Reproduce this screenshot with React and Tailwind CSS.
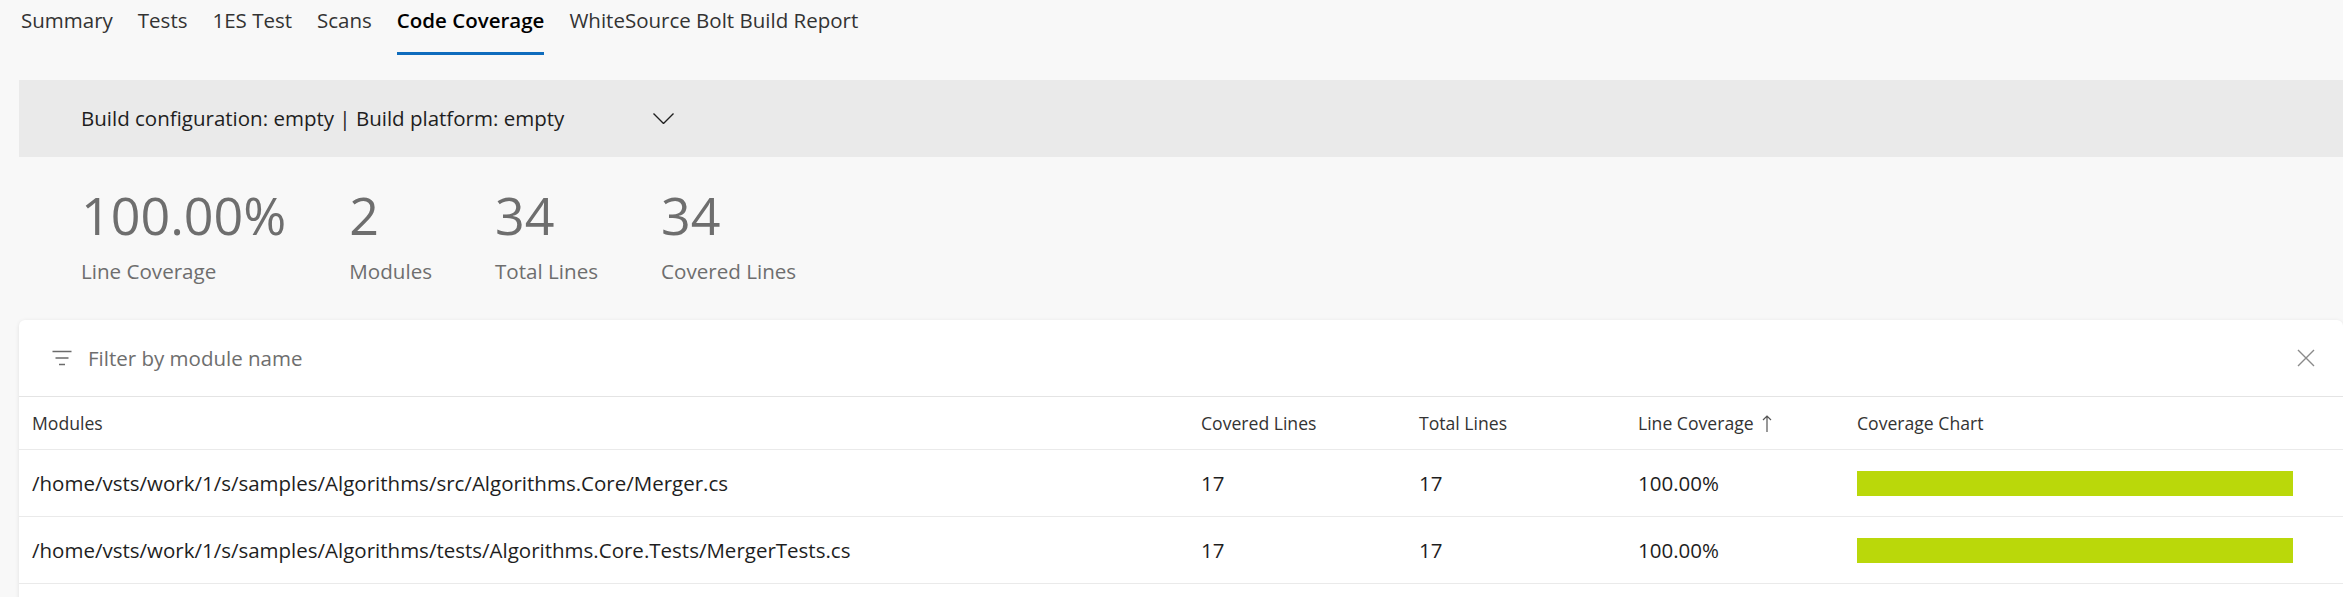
import React from 'react';

const tabs = ['Summary', 'Tests', '1ES Test', 'Scans', 'Code Coverage', 'WhiteSource Bolt Build Report'];

const stats = [
  { value: '100.00%', label: 'Line Coverage' },
  { value: '2', label: 'Modules' },
  { value: '34', label: 'Total Lines' },
  { value: '34', label: 'Covered Lines' },
];

const rows = [
  { module: '/home/vsts/work/1/s/samples/Algorithms/src/Algorithms.Core/Merger.cs', covered: 17, total: 17, coverage: 100 },
  { module: '/home/vsts/work/1/s/samples/Algorithms/tests/Algorithms.Core.Tests/MergerTests.cs', covered: 17, total: 17, coverage: 100 },
];

const FilterIcon = () => (
  <svg width="20" height="16" viewBox="0 0 20 16" fill="none" stroke="#6b6b6b" strokeWidth="1.6">
    <path d="M0.5 1.5h19M3.5 8h13M7 14.5h6" />
  </svg>
);

const CloseIcon = () => (
  <svg width="18" height="18" viewBox="0 0 18 18" fill="none" stroke="#8a8a8a" strokeWidth="1.4">
    <path d="M1 1l16 16M17 1L1 17" />
  </svg>
);

const Chevron = () => (
  <svg width="21" height="11" viewBox="0 0 21 11" fill="none" stroke="#1f1f1f" strokeWidth="1.4">
    <path d="M0.5 0.5l10 10 10-10" />
  </svg>
);

const SortArrow = () => (
  <svg width="10" height="17" viewBox="0 0 10 17" fill="none" stroke="#555" strokeWidth="1.2">
    <path d="M5 1v16M1 5l4-4 4 4" />
  </svg>
);

const App = () => {
  return (
    <div
      className="min-h-screen bg-[#f8f8f8] text-[#1e1e1e]"
      style={{ fontFamily: '"Open Sans", "Noto Sans", sans-serif' }}
    >
      {/* Tabs */}
      <div className="flex h-[55px] pl-[21px] gap-[25px] text-[20.5px]">
        {tabs.map((t) => (
          <div key={t} className="relative pt-[5px] leading-[30px]">
            <span className={t === 'Code Coverage' ? 'font-semibold text-black' : 'text-[#333]'}>{t}</span>
            {t === 'Code Coverage' && (
              <div className="absolute left-0 right-0 bottom-0 h-[3px] bg-[#0f6cbd]" />
            )}
          </div>
        ))}
      </div>

      {/* Build config bar */}
      <div className="mt-[25px] ml-[19px] h-[77px] bg-[#eaeaea] flex items-center pl-[62px]">
        <span className="text-[20.5px] text-[#1e1e1e] w-[572px]">Build configuration: empty | Build platform: empty</span>
        <Chevron />
      </div>

      {/* Stats */}
      <div className="flex gap-[63px] pl-[81px] pt-[31px] pb-[33px]">
        {stats.map((s, i) => (
          <div key={i} className="flex flex-col gap-[14px] text-[#6e6e6e]">
            <div className="text-[52px] leading-[53px]">{s.value}</div>
            <div className="text-[20.6px] leading-[32px]">{s.label}</div>
          </div>
        ))}
      </div>

      {/* Table card */}
      <div className="ml-[19px] bg-white rounded-t-[6px] shadow-[0_1px_4px_rgba(0,0,0,0.10)]">
        <div className="h-[77px] flex items-center pl-[33px] pr-[28px] border-b border-[#e4e4e4]">
          <FilterIcon />
          <span className="ml-[16px] flex-1 text-[20.5px] text-[#6e6e6e]">Filter by module name</span>
          <CloseIcon />
        </div>

        <div className="grid grid-cols-[1169px_218px_219px_219px_1fr] text-[17.6px]">
          {['Modules', 'Covered Lines', 'Total Lines', 'Line Coverage', 'Coverage Chart'].map((h) => (
            <div key={h} className="h-[53px] px-[13px] flex items-center border-b border-[#eaeaea] text-[#333]">
              {h}
              {h === 'Line Coverage' && <span className="ml-[8px] flex"><SortArrow /></span>}
            </div>
          ))}
          {rows.map((r) => (
            <React.Fragment key={r.module}>
              <div className="h-[67px] px-[13px] flex items-center border-b border-[#eaeaea] text-[20.5px]">{r.module}</div>
              <div className="h-[67px] px-[13px] flex items-center border-b border-[#eaeaea] text-[20.5px]">{r.covered}</div>
              <div className="h-[67px] px-[13px] flex items-center border-b border-[#eaeaea] text-[20.5px]">{r.total}</div>
              <div className="h-[67px] px-[13px] flex items-center border-b border-[#eaeaea] text-[20.5px]">{r.coverage.toFixed(2)}%</div>
              <div className="h-[67px] px-[13px] flex items-center border-b border-[#eaeaea]">
                <div className="w-[436px] h-[25px] bg-[#eaeaea]">
                  <div className="h-full bg-[#bad80a]" style={{ width: `${r.coverage}%` }} />
                </div>
              </div>
            </React.Fragment>
          ))}
        </div>
        <div className="h-[20px]" />
      </div>
    </div>
  );
};

export default App;
